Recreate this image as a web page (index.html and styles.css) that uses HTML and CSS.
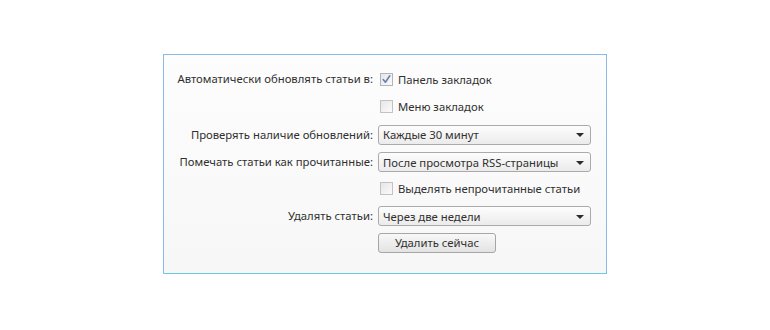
FILE: index.html
```html
<!DOCTYPE html>
<html lang="ru">
<head>
<meta charset="utf-8">
<link rel="stylesheet" href="styles.css">
</head>
<body>
<div class="panel">
  <div class="form">
    <div class="label">Автоматически обновлять статьи в:</div>
    <label class="check"><span class="box checked"><svg width="11" height="11" viewBox="0 0 11 11"><path d="M2.2 5.6 L4.4 8.2 L8.8 1.8" fill="none" stroke="#6a7fb0" stroke-width="1.6" stroke-linecap="round" stroke-linejoin="round"/></svg></span>Панель закладок</label>

    <div class="label"></div>
    <label class="check"><span class="box"></span>Меню закладок</label>

    <div class="label">Проверять наличие обновлений:</div>
    <div class="select"><span>Каждые 30 минут</span><span class="arrow"></span></div>

    <div class="label">Помечать статьи как прочитанные:</div>
    <div class="select"><span>После просмотра RSS-страницы</span><span class="arrow"></span></div>

    <div class="label"></div>
    <label class="check"><span class="box"></span>Выделять непрочитанные статьи</label>

    <div class="label">Удалять статьи:</div>
    <div class="select"><span>Через две недели</span><span class="arrow"></span></div>

    <div class="label"></div>
    <div class="btnwrap"><button class="button">Удалить сейчас</button></div>
  </div>
</div>
</body>
</html>
```
FILE: styles.css
```css
html, body {
  margin: 0;
  padding: 0;
  background: #ffffff;
}
body {
  width: 770px;
  height: 330px;
  overflow: hidden;
  font-family: "Noto Sans", "Open Sans", sans-serif;
  font-size: 11.3px;
  color: #303030;
}
.panel {
  margin: 54px 0 0 163px;
  width: 442px;
  height: 218px;
  border: 1px solid #8bbbe4;
  border-bottom-color: #6ccae4;
  background: linear-gradient(#fdfdfd, #f7f7f7);
}
.form {
  display: grid;
  grid-template-columns: 209px 213px;
  column-gap: 5px;
  grid-template-rows: 26px 28px 29px 26px 27px 28px 26px;
  padding-top: 11px;
  align-items: center;
}
.label {
  text-align: right;
  white-space: nowrap;
  line-height: 20px;
}
.check {
  display: flex;
  align-items: center;
  height: 20px;
  padding-left: 2px;
  white-space: nowrap;
}
.box {
  width: 11px;
  height: 11px;
  border: 1px solid #c2c2c2;
  background: linear-gradient(135deg, #e6e6e6, #fbfbfb);
  margin-right: 5px;
  display: flex;
  align-items: center;
  justify-content: center;
  box-sizing: content-box;
}
.box.checked {
  border-color: #b4b4b4;
}
.select {
  height: 18px;
  border: 1px solid #aaaaaa;
  border-radius: 3px;
  background: linear-gradient(#fdfdfd, #ebebeb);
  display: flex;
  align-items: center;
  justify-content: space-between;
  padding: 0 6px 0 4px;
  white-space: nowrap;
}
.arrow {
  width: 0;
  height: 0;
  border-left: 4px solid transparent;
  border-right: 4px solid transparent;
  border-top: 4px solid #2b2b2b;
  margin-top: 1px;
}
.btnwrap {
  display: flex;
}
.button {
  width: 118px;
  height: 20px;
  border: 1px solid #a6a6a6;
  border-radius: 3px;
  background: linear-gradient(#f8f8f8, #e3e3e3);
  font-family: inherit;
  font-size: 11.3px;
  color: #303030;
  padding: 0;
  line-height: 18px;
}
```
